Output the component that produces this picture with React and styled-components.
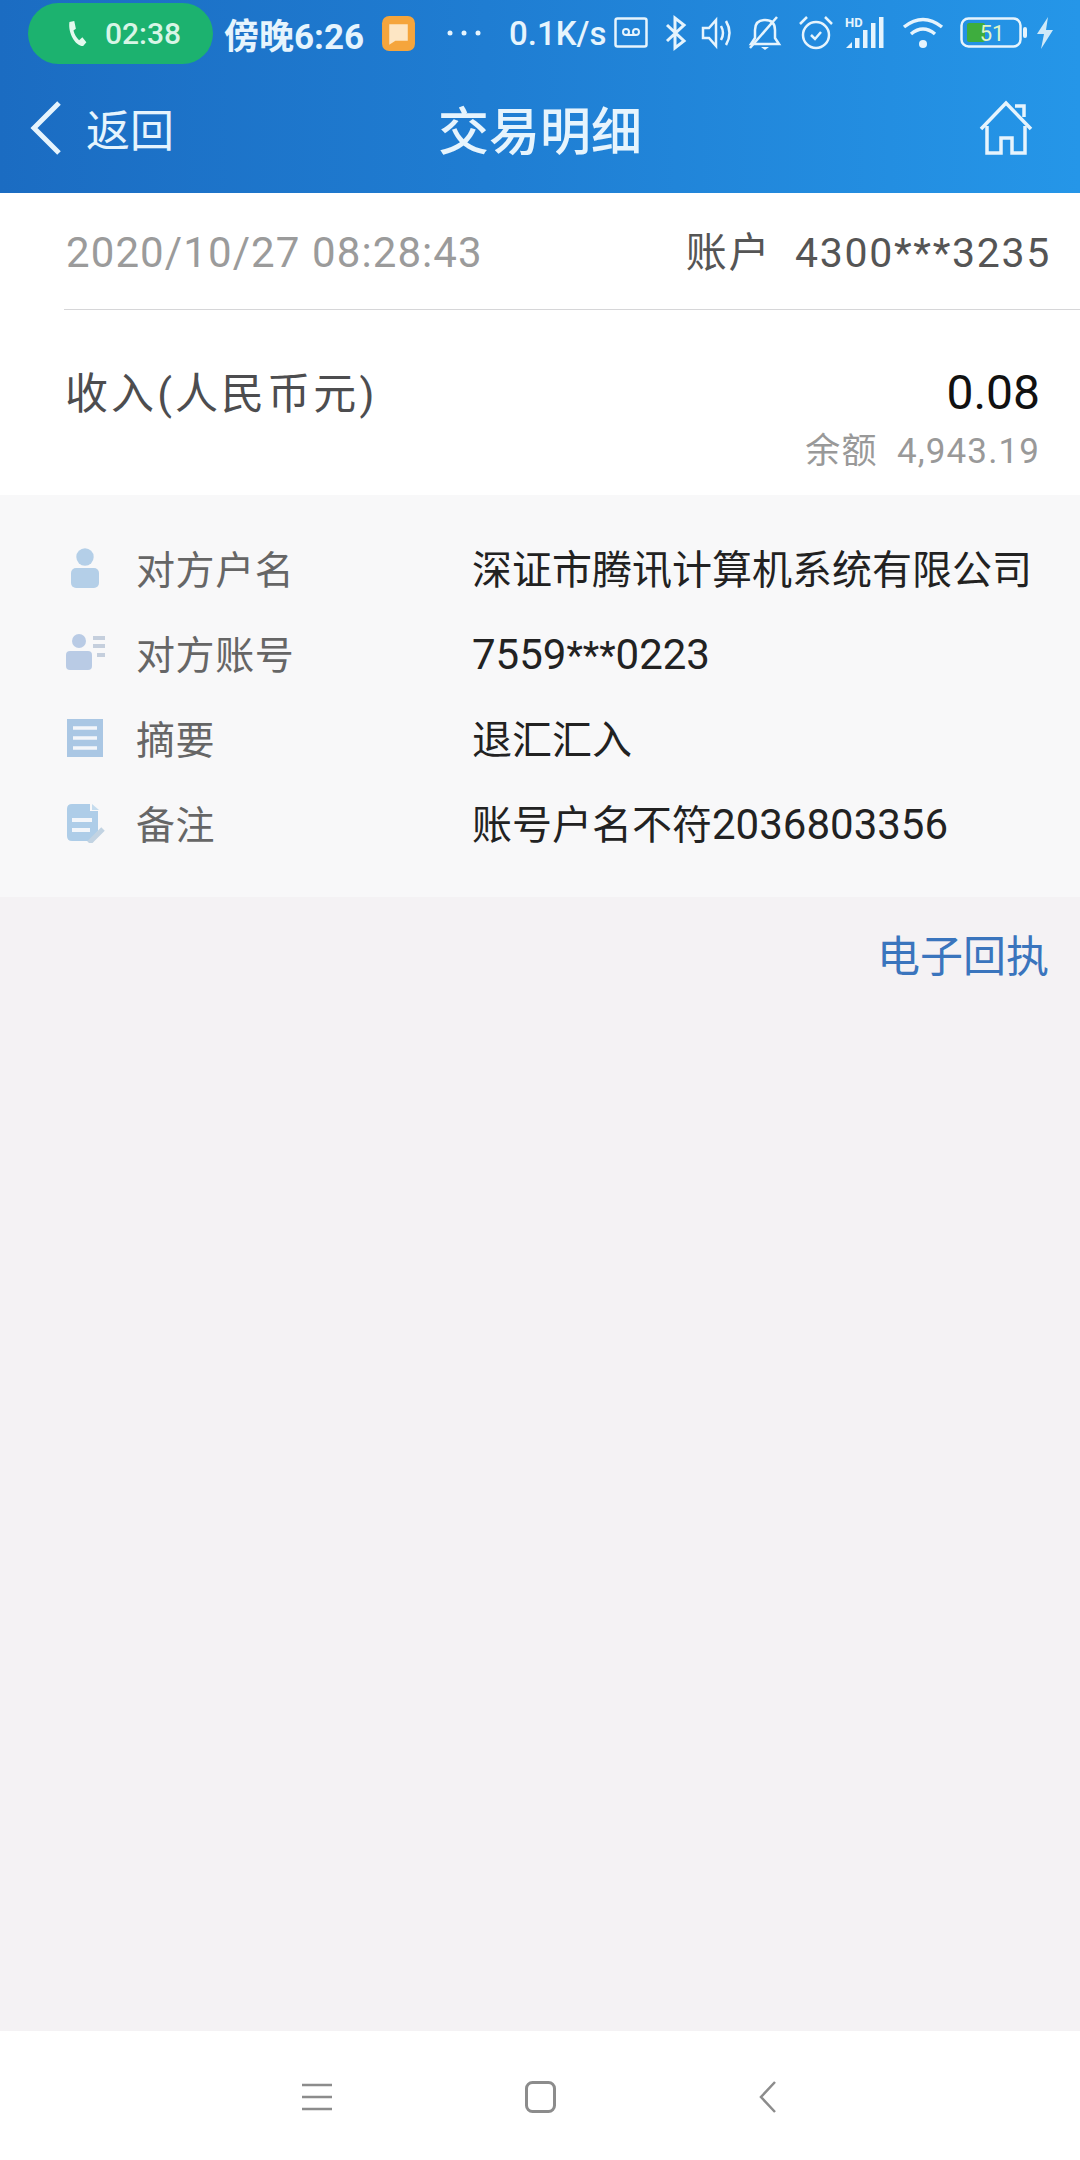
import React from "react";
import styled, { createGlobalStyle } from "styled-components";

const GlobalStyle = createGlobalStyle`
  html, body {
    margin: 0;
    padding: 0;
    background: #f4f2f4;
  }
  body {
    font-family: Roboto, "Noto Sans CJK SC", sans-serif;
  }
`;

const Page = styled.div`
  width: 1080px;
  height: 2160px;
  display: flex;
  flex-direction: column;
  background: #f4f2f4;
  overflow: hidden;
`;

const Header = styled.header`
  height: 193px;
  flex-shrink: 0;
  display: flex;
  flex-direction: column;
  color: #e6f4fd;
  background: linear-gradient(90deg, #1b6cc2 0%, #1f7dd2 45%, #2596e8 100%);
`;

const StatusBar = styled.div`
  height: 66px;
  padding-left: 28px;
  box-sizing: border-box;
  display: flex;
  align-items: center;
`;

const CallPill = styled.div`
  width: 185px;
  height: 61px;
  margin-top: 1px;
  padding-left: 39px;
  box-sizing: border-box;
  border-radius: 31px;
  background: #1cb26f;
  display: flex;
  align-items: center;
  gap: 17px;
  font-size: 30px;
  font-weight: 500;
  color: #d8f5e6;
`;

const Clock = styled.span`
  width: 139px;
  margin-left: 11px;
  font-size: 35px;
  font-weight: 700;
  white-space: nowrap;
`;

const Speed = styled.span`
  font-size: 33px;
  font-weight: 500;
  margin-left: 27px;
  width: 96px;
  white-space: nowrap;
`;

const StatusIcon = styled.svg`
  flex-shrink: 0;
  margin-left: ${(p) => p.$gap ?? 15}px;
  overflow: visible;
`;

const NavBar = styled.div`
  flex: 1;
  display: flex;
  align-items: center;
  justify-content: space-between;
  padding: 0 47px 4px 30px;
`;

const BackLink = styled.div`
  display: flex;
  align-items: center;
  gap: 24px;
  font-size: 44px;
  width: 167px;
  white-space: nowrap;
`;

const NavTitle = styled.h1`
  margin: 0;
  font-size: 51px;
  font-weight: 500;
  white-space: nowrap;
`;

const HomeSlot = styled.div`
  width: 150px;
  display: flex;
  justify-content: flex-end;
`;

const Summary = styled.section`
  background: #fff;
  height: 302px;
  flex-shrink: 0;
  padding-left: 64px;
  display: flex;
  flex-direction: column;
`;

const MetaRow = styled.div`
  height: 117px;
  flex-shrink: 0;
  box-sizing: border-box;
  padding: 3px 29px 0 2px;
  display: flex;
  align-items: center;
  justify-content: space-between;
  border-bottom: 1px solid #d6d6d8;
`;

const DateText = styled.span`
  font-size: 42px;
  letter-spacing: 1.1px;
  color: #9b9b9b;
`;

const AccountText = styled.span`
  padding-bottom: 8px;
  font-size: 41px;
  letter-spacing: 1.7px;
  color: #555;
  white-space: pre;
`;

const AmountRow = styled.div`
  padding: 54px 40px 0 1px;
  display: flex;
  justify-content: space-between;
`;

const IncomeLabel = styled.span`
  padding-top: 1px;
  font-size: 43px;
  letter-spacing: 3.1px;
  line-height: 58px;
  color: #4d4d4f;
  white-space: nowrap;
`;

const AmountColumn = styled.div`
  display: flex;
  flex-direction: column;
  align-items: flex-end;
`;

const Amount = styled.span`
  font-size: 48px;
  line-height: 58px;
  color: #111;
`;

const Balance = styled.span`
  font-size: 35px;
  letter-spacing: 1.1px;
  line-height: 60px;
  color: #999;
  white-space: pre;
`;

const DetailPanel = styled.section`
  background: #f8f8f9;
  height: 402px;
  flex-shrink: 0;
  box-sizing: border-box;
  padding: 32px 0 0 66px;
  display: flex;
  flex-direction: column;
`;

const DetailRow = styled.div`
  height: 85px;
  display: flex;
  align-items: center;
`;

const DetailIcon = styled.svg`
  width: 40px;
  height: 40px;
  margin-top: -3px;
  flex-shrink: 0;
`;

const DetailLabel = styled.span`
  width: 336px;
  margin-left: 30px;
  padding-bottom: 6px;
  font-family: "Noto Sans CJK SC", sans-serif;
  font-size: 39px;
  letter-spacing: 0.6px;
  color: #666;
`;

const DetailValue = styled.span`
  padding-bottom: 6px;
  font-family: "Noto Sans CJK SC", sans-serif;
  font-size: 40px;
  color: #222;
  white-space: nowrap;
`;

const Digits = styled.span`
  font-family: Roboto, sans-serif;
  font-size: 42px;
`;

const Stars = styled.span`
  font-size: 38px;
`;

const ReceiptRow = styled.div`
  display: flex;
  justify-content: flex-end;
  padding: 30px 31px 0 0;
`;

const ReceiptLink = styled.a`
  font-size: 43px;
  line-height: 60px;
  color: #3a75bd;
`;

const Spacer = styled.div`
  flex: 1;
`;

const SystemNav = styled.nav`
  height: 129px;
  flex-shrink: 0;
  background: #fff;
  display: flex;
  align-items: center;
  box-sizing: border-box;
  padding: 2px 0 0 302px;
  gap: 193px;
`;

const NavBack = styled.svg`
  margin-left: 10px;
`;

const Phone = () => (
  <svg width="21" height="27" viewBox="0 0 26 28" preserveAspectRatio="none">
    <path d="M3 2 L9 1 L11 9 L8 11 C9 15 12 19 15 21 L19 18 L24 23 L20 27 C10 27 1 13 3 2 Z" fill="#e4f9ee" />
  </svg>
);

const ChevronBack = () => (
  <svg width="32" height="54" viewBox="0 0 32 54">
    <path d="M29 2 L4 27 L29 52" fill="none" stroke="#e6f4fd" strokeWidth="5" />
  </svg>
);

const HomeIcon = () => (
  <svg width="54" height="56" viewBox="0 0 54 56">
    <g fill="none" stroke="#e6f4fd" strokeWidth="3.5">
      <path d="M2 29 L27 3 L52 29" />
      <path d="M36 6 H45 V17" />
      <path d="M8 26 V53 H22 V38 H33 V53 H46 V26" />
    </g>
  </svg>
);

const PersonIcon = () => (
  <DetailIcon viewBox="0 0 40 40">
    <circle cx="19" cy="9" r="8.7" fill="#b4cfe8" />
    <rect x="5" y="20" width="28" height="20" rx="5" fill="#b4cfe8" />
  </DetailIcon>
);

const CardIcon = () => (
  <DetailIcon viewBox="0 0 40 40">
    <circle cx="13" cy="8" r="7" fill="#b9cbe5" />
    <rect x="0" y="18" width="26" height="19" rx="4" fill="#b9cbe5" />
    <path d="M27 5 H39 M27 13 H39 M31 22 H39" stroke="#c5cfdd" strokeWidth="4" />
  </DetailIcon>
);

const ListIcon = () => (
  <DetailIcon viewBox="0 0 40 40">
    <rect x="1" y="1" width="36" height="38" fill="#aac7e4" />
    <path d="M7 10 H31 M7 20 H31 M7 30 H31" stroke="#f3f6fa" strokeWidth="3.5" />
  </DetailIcon>
);

const NoteIcon = () => (
  <DetailIcon viewBox="0 0 40 40">
    <path d="M6 1 H24 L24 8 L32 8 L32 28 L24 38 H6 Q1 38 1 33 V6 Q1 1 6 1 Z" fill="#aecde8" />
    <path d="M26 1 L33 7 H26 Z" fill="#c5dcee" />
    <path d="M6 17 H26 M6 27 H24" stroke="#f3f6fa" strokeWidth="4" />
    <path d="M23 40 L37 26" stroke="#c2d3e2" strokeWidth="5" />
  </DetailIcon>
);

const details = [
  { icon: <PersonIcon />, label: "对方户名", value: "深证市腾讯计算机系统有限公司" },
  {
    icon: <CardIcon />,
    label: "对方账号",
    value: (
      <Digits>
        7559<Stars>***</Stars>0223
      </Digits>
    ),
  },
  { icon: <ListIcon />, label: "摘要", value: "退汇汇入" },
  {
    icon: <NoteIcon />,
    label: "备注",
    value: (
      <>
        账号户名不符<Digits>2036803356</Digits>
      </>
    ),
  },
];

const App = () => (
  <Page>
    <GlobalStyle />
    <Header>
      <StatusBar>
        <CallPill>
          <Phone />
          <span>02:38</span>
        </CallPill>
        <Clock>傍晚6:26</Clock>
        <StatusIcon $gap={19} width="33" height="35" viewBox="0 0 32 34">
          <rect width="32" height="34" rx="7" fill="#f5a53c" />
          <path d="M7 8 H25 V24 H13 L7 28 Z" fill="#fde6c4" />
        </StatusIcon>
        <StatusIcon $gap={31} width="36" height="8" viewBox="0 0 36 8">
          <g fill="#e6f4fd">
            <circle cx="4" cy="4" r="2.5" />
            <circle cx="18" cy="4" r="2.5" />
            <circle cx="32" cy="4" r="2.5" />
          </g>
        </StatusIcon>
        <Speed>0.1K/s</Speed>
        <StatusIcon $gap={9} width="34" height="32" viewBox="0 0 34 32">
          <rect x="1.5" y="1.5" width="31" height="28" rx="2" fill="none" stroke="#e6f4fd" strokeWidth="2.5" />
          <g fill="none" stroke="#e6f4fd" strokeWidth="2">
            <circle cx="12" cy="15" r="3" />
            <circle cx="22" cy="15" r="3" />
            <path d="M12 18 H22" />
          </g>
        </StatusIcon>
        <StatusIcon $gap={17} width="22" height="34" viewBox="0 0 22 34">
          <path d="M2 9 L19 25 L10 32 V2 L19 9 L2 25" fill="none" stroke="#e6f4fd" strokeWidth="3" />
        </StatusIcon>
        <StatusIcon $gap={14} width="32" height="32" viewBox="0 0 32 32">
          <g fill="none" stroke="#e6f4fd" strokeWidth="2.5">
            <path d="M2 11 H8 L15 3 V29 L8 21 H2 Z" />
            <path d="M20 9 Q24 16 20 23" />
            <path d="M25 4 Q32 16 25 28" />
          </g>
        </StatusIcon>
        <StatusIcon $gap={16} width="32" height="34" viewBox="0 0 32 34">
          <g fill="none" stroke="#e6f4fd" strokeWidth="2.5">
            <path d="M2 28 H30 L26 22 V14 Q26 4 16 4 Q6 4 6 14 V22 Z" />
            <path d="M1 32 L28 1" />
          </g>
          <path d="M12 31 H20 L16 34 Z" fill="#e6f4fd" />
        </StatusIcon>
        <StatusIcon $gap={17} width="36" height="36" viewBox="0 0 36 36">
          <g fill="none" stroke="#e6f4fd" strokeWidth="2.5">
            <circle cx="18" cy="20" r="13" />
            <path d="M13 20 L17 24 L23 17" />
            <path d="M2 9 L9 2" />
            <path d="M34 9 L27 2" />
          </g>
        </StatusIcon>
        <StatusIcon $gap={11} width="42" height="34" viewBox="0 0 42 34">
          <text x="0" y="11" fontSize="13" fontWeight="700" fontFamily="Roboto, sans-serif" fill="#e6f4fd">HD</text>
          <g fill="#e6f4fd">
            <path d="M1 32 L7 26 V32 Z" />
            <rect x="10" y="22" width="4.5" height="10" />
            <rect x="18" y="14" width="4.5" height="18" />
            <rect x="26" y="7" width="4.5" height="25" />
            <rect x="34" y="1" width="4.5" height="31" />
          </g>
        </StatusIcon>
        <StatusIcon $gap={15} width="42" height="32" viewBox="0 0 42 32">
          <g fill="none" stroke="#e6f4fd" strokeWidth="3.5">
            <path d="M2 10 Q21 -5 40 10" />
            <path d="M9 17 Q21 7 33 17" />
          </g>
          <circle cx="21" cy="27" r="4" fill="#e6f4fd" />
        </StatusIcon>
        <StatusIcon $gap={16} width="68" height="32" viewBox="0 0 68 32">
          <rect x="1.5" y="1.5" width="59" height="28" rx="7" fill="none" stroke="#e6f4fd" strokeWidth="2.5" />
          <rect x="7" y="6" width="18" height="19" rx="2" fill="#3ead3e" />
          <rect x="63" y="10" width="4" height="11" rx="2" fill="#e6f4fd" />
          <text x="32" y="24" textAnchor="middle" fontSize="22" fontFamily="Roboto, sans-serif" fill="#dff5c8">51</text>
        </StatusIcon>
        <StatusIcon $gap={8} width="18" height="32" viewBox="0 0 18 32">
          <path d="M12 0 L1 17 H8 L5 32 L17 13 H10 Z" fill="#cfe9f8" />
        </StatusIcon>
      </StatusBar>
      <NavBar>
        <BackLink>
          <ChevronBack />
          <span>返回</span>
        </BackLink>
        <NavTitle>交易明细</NavTitle>
        <HomeSlot>
          <HomeIcon />
        </HomeSlot>
      </NavBar>
    </Header>

    <Summary>
      <MetaRow>
        <DateText>2020/10/27 08:28:43</DateText>
        <AccountText>账户  4300***3235</AccountText>
      </MetaRow>
      <AmountRow>
        <IncomeLabel>收入(人民币元)</IncomeLabel>
        <AmountColumn>
          <Amount>0.08</Amount>
          <Balance>余额  4,943.19</Balance>
        </AmountColumn>
      </AmountRow>
    </Summary>

    <DetailPanel>
      {details.map((row) => (
        <DetailRow key={row.label}>
          {row.icon}
          <DetailLabel>{row.label}</DetailLabel>
          <DetailValue>{row.value}</DetailValue>
        </DetailRow>
      ))}
    </DetailPanel>

    <ReceiptRow>
      <ReceiptLink>电子回执</ReceiptLink>
    </ReceiptRow>

    <Spacer />

    <SystemNav>
      <svg width="30" height="28" viewBox="0 0 30 28">
        <path d="M0 2 H30 M0 14 H30 M0 26 H30" stroke="#8c8c8c" strokeWidth="2.5" />
      </svg>
      <svg width="31" height="32" viewBox="0 0 31 32">
        <rect x="1.5" y="1.5" width="28" height="29" rx="6" fill="none" stroke="#8c8c8c" strokeWidth="3" />
      </svg>
      <NavBack width="17" height="32" viewBox="0 0 17 32">
        <path d="M16 1 L2 16 L16 31" fill="none" stroke="#8c8c8c" strokeWidth="2.5" />
      </NavBack>
    </SystemNav>
  </Page>
);

export default App;
